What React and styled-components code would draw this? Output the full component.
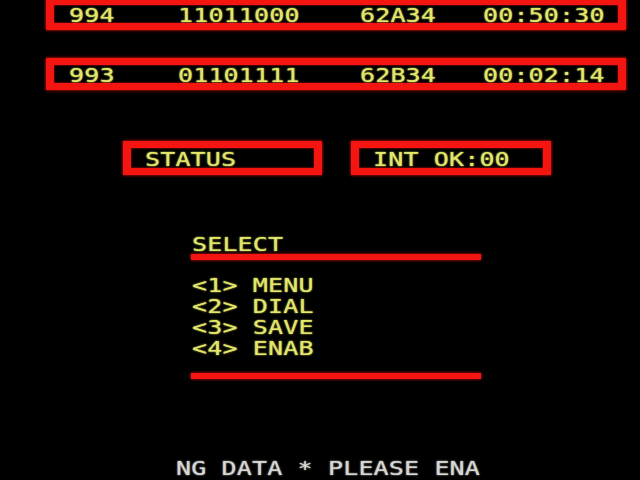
import styled, { createGlobalStyle } from 'styled-components'

const GlobalStyle = createGlobalStyle`
  html, body {
    margin: 0;
    padding: 0;
    background: #000;
    overflow: hidden;
  }
`

const trades = [
  { id: '994', bits: '11011000', code: '62A34', time: '00:50:30' },
  { id: '993', bits: '01101111', code: '62B34', time: '00:02:14' },
]

const options = ['MENU', 'DIAL', 'SAVE', 'ENAB']

export default function App() {
  return (
    <>
      <GlobalStyle />
      <Screen>
        <Rows>
          {trades.map((t) => (
            <DataRow key={t.id}>
              <Cell><Glyphs>{t.id}</Glyphs></Cell>
              <Cell><Glyphs>{t.bits}</Glyphs></Cell>
              <Cell><Glyphs>{t.code}</Glyphs></Cell>
              <Cell><Glyphs>{t.time}</Glyphs></Cell>
            </DataRow>
          ))}
        </Rows>

        <StatusBar>
          <StatusBox $width={199}>
            <Glyphs>STATUS</Glyphs>
          </StatusBox>
          <StatusBox $width={200}>
            <Glyphs>INT OK:00</Glyphs>
          </StatusBox>
        </StatusBar>

        <SelectPanel>
          <Heading>
            <Glyphs>SELECT</Glyphs>
          </Heading>
          <Rule />
          <Options>
            {options.map((o, i) => (
              <Option key={o}>
                <Glyphs>{`<${i + 1}> ${o}`}</Glyphs>
              </Option>
            ))}
          </Options>
          <Rule />
        </SelectPanel>

        <Ticker>
          <Glyphs>NG DATA * PLEASE ENA</Glyphs>
        </Ticker>
      </Screen>
    </>
  )
}

const Screen = styled.div`
  width: 640px;
  height: 480px;
  overflow: hidden;
  background: #000;
  color: #e2e66a;
  font-family: 'DejaVu Sans Mono', monospace;
  font-size: 25px;
  letter-spacing: 0.15px;
  white-space: pre;
`

// terminal glyphs are wide and squat, so the mono face is squeezed vertically
const Glyphs = styled.span`
  display: inline-block;
  transform: translateY(2px) scaleY(0.77);
  text-shadow: 0 0 2px currentColor;
`

const Rows = styled.div`
  display: flex;
  flex-direction: column;
  gap: 28px;
  margin: -2px 0 0 46px;
`

const DataRow = styled.div`
  box-sizing: border-box;
  width: 580px;
  height: 32px;
  border: solid #f41410;
  border-width: 7px 8px;
  box-shadow: 0 0 3px #f41410, inset 0 0 2px #f41410;
  display: grid;
  grid-template-columns: 109px 182px 123px auto;
  align-items: center;
  padding-left: 15px;
  line-height: 18px;
`

const Cell = styled.div`
  line-height: 18px;
`

const StatusBar = styled.div`
  display: flex;
  gap: 29px;
  margin: 51px 0 0 123px;
`

const StatusBox = styled.div`
  box-sizing: border-box;
  width: ${(p) => p.$width}px;
  height: 34px;
  border: solid #f41410;
  border-width: 7px 8px;
  box-shadow: 0 0 3px #f41410, inset 0 0 2px #f41410;
  display: flex;
  align-items: center;
  padding-left: 14px;
  line-height: 20px;
`

const SelectPanel = styled.div`
  width: 290px;
  margin: 57px 0 0 191px;
`

const Heading = styled.div`
  line-height: 21px;
  padding-left: 1px;
`

const Rule = styled.div`
  height: 6px;
  margin-top: 1px;
  background: #f41410;
  box-shadow: 0 0 3px #f41410;

  & + div {
    margin-top: 13px;
  }
`

const Options = styled.div`
  display: flex;
  flex-direction: column;
  padding-left: 1px;
  margin-bottom: 16px;
`

const Option = styled.div`
  line-height: 21px;
`

const Ticker = styled.div`
  margin: 77px 0 0 176px;
  line-height: 21px;
  color: #d6d6d2;
`
